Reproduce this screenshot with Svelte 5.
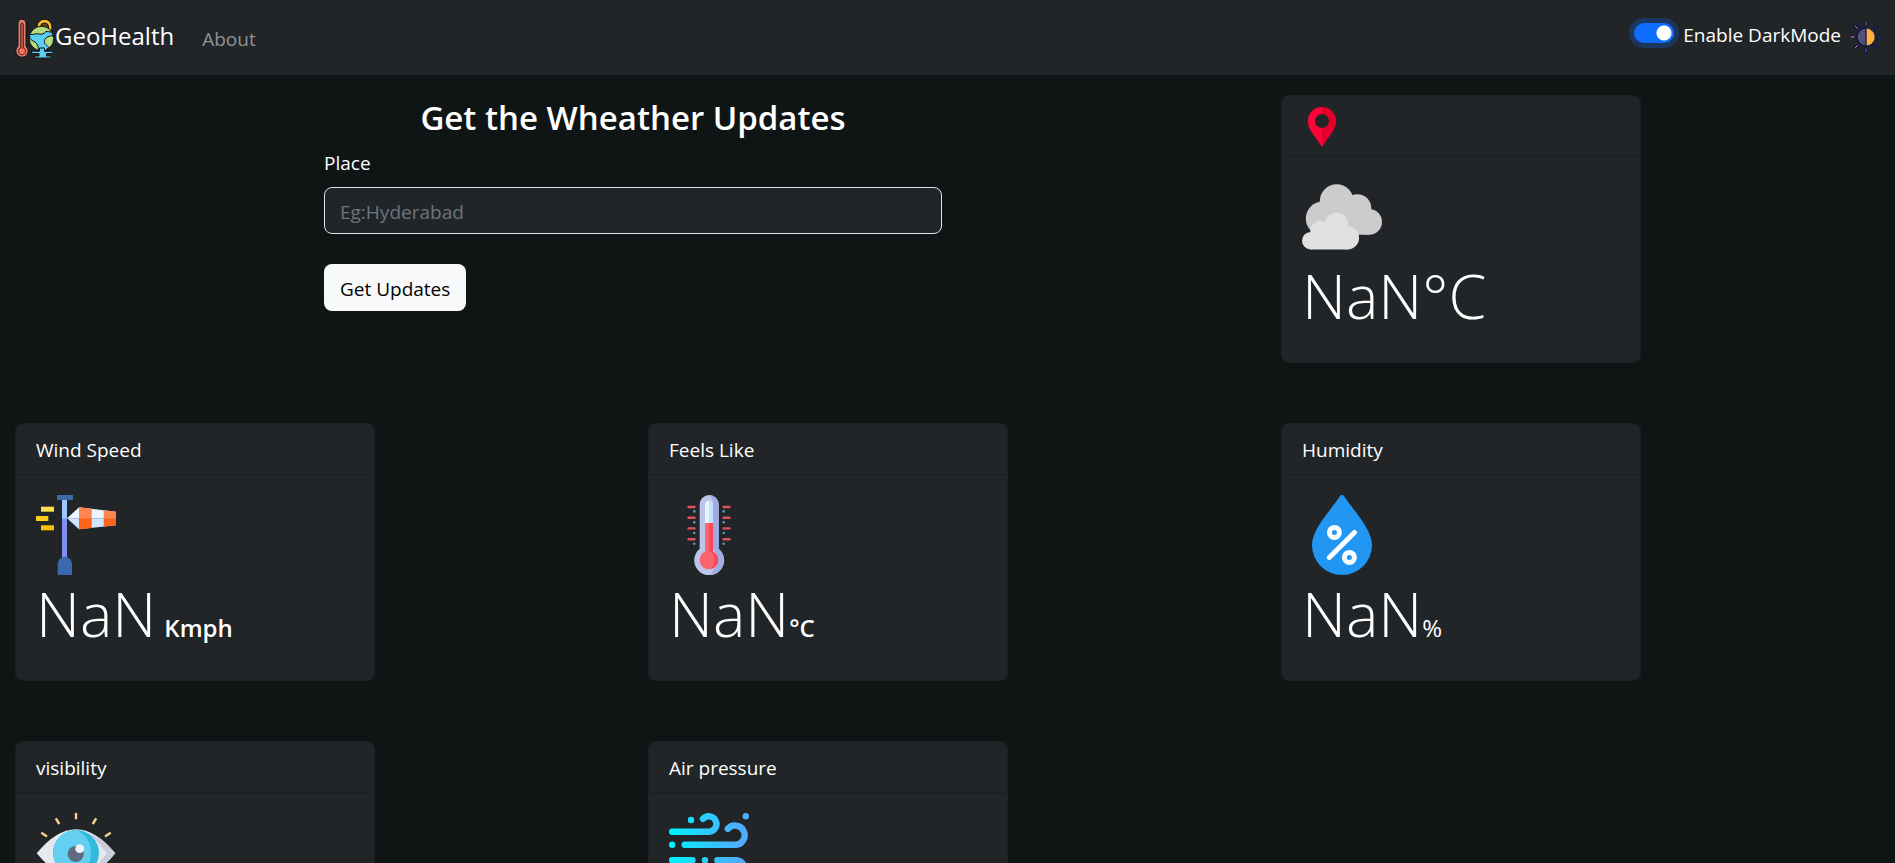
<script>
  let darkMode = $state(true);
  let place = $state('');

  const readings = [
    { title: 'Wind Speed', icon: 'windsock', value: 'NaN', unit: 'Kmph', spaced: true },
    { title: 'Feels Like', icon: 'thermometer', value: 'NaN', unit: '°C' },
    { title: 'Humidity', icon: 'drop', value: 'NaN', unit: '%', light: true },
    { title: 'visibility', icon: 'eye' },
    { title: 'Air pressure', icon: 'wind' }
  ];

  const icons = { windsock, thermometer, drop, eye, wind };
</script>

{#snippet windsock()}
  <svg class="icon" viewBox="0 0 80 80" aria-hidden="true">
    <path fill="#9bc9ff" d="M26 5h5v19h-5z" />
    <path fill="#8190f0" d="M26 23.500h5V63h-5z" />
    <path fill="#3f6ba5" d="M21 0h16v5H21z" />
    <path fill="#3a69ad" d="M21.700 80V69a7.200 7.200 0 0 1 14.400 0v11z" />
    <path fill="#ffdf52" d="M5 11.700h13v5H5z" />
    <path fill="#fdcb1a" d="M0 21h12.300v5H0z" />
    <path fill="#fdbf08" d="M5 30.300h13v5H5z" />
    <path fill="#e9f6ff" d="M31 23.300 43 12.300 80 16.700v6.600z" />
    <path fill="#cfe5ff" d="M31 23.300h49v7L43 34.300z" />
    <path fill="#ff8653" d="m43 12.300 12.700 1.500v9.500H43zM67.700 15.200 80 16.700v6.600H67.700z" />
    <path fill="#ff6417" d="M43 23.300h12.700v9.600L43 34.300zM67.700 23.300H80v7l-12.300 1.300z" />
  </svg>
{/snippet}

{#snippet thermometer()}
  <svg class="icon" viewBox="0 0 80 80" aria-hidden="true">
    <path fill="#bdc6ea" d="M30.700 9.500a9.500 9.500 0 0 1 19 0v44.200a15 15 0 1 1-19 0z" />
    <path fill="#a2abe0" d="M41 0a9.500 9.500 0 0 1 8.700 9.500v44.200A15 15 0 0 1 41 80c6-5 7-20 3-27V6z" />
    <path fill="#c4e2ff" d="M36 10a4 4 0 0 1 8 0v19h-8z" />
    <path fill="#e8f4ff" d="M36 10a4 4 0 0 1 4-4v23h-4z" />
    <path fill="#fd4755" d="M36 28h8v28.700a9.200 9.200 0 1 1-8 0z" />
    <path fill="#fe646f" d="M36 28h4v28.500c7 3 7 11 1.500 17.500A9.200 9.200 0 0 1 36 56.700z" />
    <g stroke="#e04f5c" stroke-width="2.400" stroke-linecap="round">
      {#each [12, 22.7, 33.4, 44.2] as y}
        <path d="M19.500 {y}h6M54.500 {y}h6" />
      {/each}
    </g>
    <g fill="#4a9ccb">
      {#each [16.4, 27.3, 38, 48.7] as y}
        <circle cx="25.300" cy={y} r="1.300" />
        <circle cx="54.700" cy={y} r="1.300" />
      {/each}
    </g>
  </svg>
{/snippet}

{#snippet drop()}
  <svg class="icon" viewBox="0 0 80 80" aria-hidden="true">
    <path fill="#2196f3" d="M38 1a2.500 2.500 0 0 1 4 0C51 15 70 34 70 50a30 30 0 0 1-60 0C10 34 29 15 38 1z" />
    <g fill="none" stroke="#fafdff" stroke-width="5" stroke-linecap="round">
      <circle cx="32.400" cy="37.400" r="5" />
      <circle cx="47.400" cy="62.400" r="5" />
      <path d="m27.300 62.500 25.200-25" />
    </g>
  </svg>
{/snippet}

{#snippet eye()}
  <svg class="icon" viewBox="0 0 80 80" aria-hidden="true">
    <path fill="#e4e9ed" d="M.700 40.300Q40-8 79.300 40.300 40 88 .700 40.300z" />
    <path fill="#c9cfda" d="M54 20.500q13 4.500 25.300 19.800Q67 56 54 60.500l17-20.200z" />
    <circle cx="40" cy="40" r="23" fill="#30bbdc" />
    <path fill="#63cff1" d="M40 17a23 23 0 0 0 0 46c20-6 20-40 0-46z" />
    <circle cx="39.700" cy="41" r="8" fill="#5d6c7e" />
    <circle cx="43.700" cy="35.700" r="4.400" fill="#f0f2fa" />
    <path
      fill="none"
      stroke="#fbd387"
      stroke-width="2.400"
      d="M40 0v6.300M19.800 5.300l3.500 5.700M60.200 5.300 56.700 11M5.300 19.800l5.700 3.600M74.700 19.800 69 23.400"
    />
  </svg>
{/snippet}

{#snippet wind()}
  <svg class="icon" viewBox="0 0 80 80" aria-hidden="true">
    <defs>
      <linearGradient id="breeze" gradientUnits="userSpaceOnUse" x1="0" y1="0" x2="70" y2="0">
        <stop offset="0" stop-color="#00f2fe" />
        <stop offset="1" stop-color="#4facfe" />
      </linearGradient>
    </defs>
    <g fill="none" stroke="url(#breeze)" stroke-width="6.400" stroke-linecap="round">
      <path d="M3.200 18.700H40a7.700 7.700 0 1 0-6-12.800" />
      <path d="M15.700 31.800H66a9.600 9.600 0 1 0-7.200-15.900" />
      <path d="M3.200 47.300H23.500M48.400 47.300H67a9 9 0 1 1-7 15" />
    </g>
    <g fill="url(#breeze)">
      <circle cx="22" cy="7" r="3.200" />
      <circle cx="76.800" cy="3.200" r="3.200" />
      <circle cx="3.200" cy="31.800" r="3.200" />
      <circle cx="36" cy="47.300" r="3.200" />
    </g>
  </svg>
{/snippet}

<div class="page">
  <nav class="navbar">
    <a class="brand" href="#home">
      <svg class="logo" viewBox="0 0 40 42" aria-hidden="true">
        <g stroke="#10100f" stroke-width="1">
          <path fill="#f6b92c" d="M22 9.500a7.500 7.500 0 0 1 15 .500l-.500 5H22z" />
          <path fill="#5a4a20" d="M25.500 10a4 4 0 0 1 8 0v3h-8z" />
          <circle cx="26.500" cy="21.500" r="12.300" fill="#b5dc80" />
          <path fill="#5ccdf3" d="M15 17.500c4 .500 6-1.500 9-.500s5-.500 7-2.500l5.500.500 2 4c-4-.500-8 1-9 4.500s3 4.500 4 7l-3.500 3.500h-7c1-5-1-8-4-9.500s-4.500-3-4.500-6z" />
          <path fill="#5ccdf3" d="M24.500 31h5v3.200h8.500v2.400h-6.500v2.400H36V41H19.500v-2h4.500v-2.400h-7.500v-2.400h8z" />
          <path fill="#e87d6b" d="M3 6a4 4 0 0 1 8 0v23.300a6.200 6.200 0 1 1-8 0z" />
          <path fill="#b34d40" stroke-width=".600" d="M5.500 7.500a1.500 1.500 0 0 1 3 0v23.300a3.700 3.700 0 1 1-3 0z" />
        </g>
        <circle cx="7" cy="34.200" r="2.800" fill="#fb715a" />
        <path stroke="#10100f" d="M12 7h2M12 11h2M12 15h2" />
      </svg>
      <span>GeoHealth</span>
    </a>
    <a class="link" href="#about">About</a>
    <div class="mode">
      <input id="dark-mode" type="checkbox" role="switch" bind:checked={darkMode} />
      <label for="dark-mode">Enable DarkMode</label>
      <svg class="sun" viewBox="0 0 34 34" aria-hidden="true">
        <g stroke="#11104a" stroke-width="3.200" stroke-linecap="round">
          <path d="M17 2v3M17 29v3M2 17h3M29 17h3M6.400 6.400l2 2M25.600 25.600l2 2M6.400 27.600l2-2M25.600 8.400l2-2" />
        </g>
        <g stroke-width="1" stroke-linecap="round">
          <path stroke="#e79a9c" d="M2 17h3M6.400 6.400l2 2M6.400 27.600l2-2" />
          <path stroke="#7f7197" d="M17 2v3M17 29v3" />
          <path stroke="#34406e" d="M29 17h3M25.600 25.600l2 2M25.600 8.400l2-2" />
        </g>
        <circle cx="17" cy="17" r="9" fill="#51517c" />
        <path fill="#ffb33e" d="M17 8a9 9 0 0 1 0 18z" />
        <path fill="none" stroke="#11104a" stroke-width="1.300" d="M17 8v18a9 9 0 0 1 0-18" />
        <path fill="none" stroke="#11104a" stroke-width="1.300" stroke-dasharray="1.500 1" d="M17 8a9 9 0 0 1 0 18" />
      </svg>
    </div>
  </nav>

  <main class="board">
    <form class="search" onsubmit={(event) => event.preventDefault()}>
      <h1>Get the Wheather Updates</h1>
      <label for="place">Place</label>
      <input id="place" type="text" placeholder="Eg:Hyderabad" bind:value={place} />
      <button type="submit">Get Updates</button>
    </form>

    <section class="card">
      <header>
        <svg class="pin" viewBox="0 0 40 40" aria-hidden="true">
          <path fill="#ff0338" d="M20 0A14.200 14.200 0 0 0 5.800 14.200C5.800 23 14 30 20 40V21a7 7 0 0 1 0-14z" />
          <path fill="#e4002b" d="M20 0a14.200 14.200 0 0 1 14.200 14.200C34.200 23 26 30 20 40V21a7 7 0 0 0 0-14z" />
        </svg>
      </header>
      <div class="body">
        <svg class="icon" viewBox="0 0 80 80" aria-hidden="true">
          <g fill="#cdcbcc">
            <circle cx="34.700" cy="24.200" r="16.900" />
            <circle cx="20.800" cy="41.500" r="17" />
            <circle cx="55.300" cy="31.200" r="14" />
            <circle cx="67.200" cy="44.900" r="12.800" />
            <path d="M25 30h35l7.200 27.700H21z" />
          </g>
          <g fill="#e2e0e1">
            <circle cx="8.700" cy="63.700" r="8.700" />
            <circle cx="18.200" cy="53.800" r="10" />
            <circle cx="34.400" cy="47.800" r="12" />
            <circle cx="45.700" cy="61" r="11.400" />
            <path d="M8.700 60 25 50h18l2.700 22.400h-37z" />
          </g>
        </svg>
        <p class="value">NaN°C</p>
      </div>
    </section>

    {#each readings as reading}
      <section class="card">
        <header>{reading.title}</header>
        <div class="body">
          {@render icons[reading.icon]()}
          {#if reading.value}
            <p class="value">
              {reading.value}<span class="unit" class:spaced={reading.spaced} class:light={reading.light}>{reading.unit}</span>
            </p>
          {/if}
        </div>
      </section>
    {/each}
  </main>
</div>

<style>
  :global(html) {
    scrollbar-width: none;
  }

  :global(body) {
    margin: 0;
    background: #0f1515;
  }

  .page,
  .page * {
    box-sizing: border-box;
  }

  .page {
    color: #fff;
    font: 400 19px/30px 'Open Sans', 'Noto Sans', sans-serif;
  }

  .navbar {
    display: flex;
    align-items: center;
    min-height: 75px;
    padding: 0 12px 0 15px;
    background: #212528;
  }

  .brand {
    display: flex;
    align-items: center;
    color: #fff;
    font-size: 24px;
    text-decoration: none;
  }

  .brand span {
    padding-bottom: 4px;
  }

  .logo {
    width: 40px;
    height: 42px;
  }

  .link {
    margin-left: 28px;
    padding-top: 2px;
    color: #909294;
    text-decoration: none;
  }

  .mode {
    display: flex;
    align-items: center;
    margin-left: auto;
    padding-bottom: 6px;
  }

  .mode input {
    appearance: none;
    width: 40px;
    height: 20px;
    margin: 0 9px 4px 0;
    border-radius: 10px;
    background: #495057 radial-gradient(circle at 10px 10px, #fff 7px, transparent 8px);
    box-shadow: 0 0 0 5px rgba(13, 110, 253, 0.25);
  }

  .mode input:checked {
    background: #0d6efd radial-gradient(circle at 30px 10px, #fff 7px, transparent 8px);
  }

  .sun {
    width: 34px;
    height: 34px;
    margin: 4px 0 0 8px;
  }

  .board {
    display: grid;
    grid-template-columns: repeat(3, 1fr);
    align-items: start;
    gap: 60px 30px;
    padding: 20px 11px 60px 15px;
  }

  .search {
    grid-column: span 2;
    display: flex;
    flex-direction: column;
    align-items: flex-start;
    width: 50%;
    margin: 0 auto;
  }

  h1 {
    align-self: center;
    margin: 0;
    padding: 2px 0 8px;
    font-size: 33px;
    font-weight: 600;
    line-height: 42px;
  }

  .search label {
    padding-top: 1px;
    margin-bottom: 9px;
  }

  .search input {
    width: 100%;
    height: 47px;
    margin-bottom: 30px;
    padding: 2px 15px 0;
    border: 1px solid #dee2e6;
    border-radius: 8px;
    background: #212529;
    color: #fff;
    font: inherit;
  }

  .search input::placeholder {
    color: #6c757d;
    opacity: 1;
  }

  button {
    height: 47px;
    padding: 2px 16px 0;
    border: 0;
    border-radius: 8px;
    background: #f8f9fa;
    color: #000;
    font: inherit;
  }

  .card {
    width: 360px;
    max-width: 100%;
    border: 1px solid #1c2022;
    border-radius: 8px;
    background: #212527;
  }

  .card header {
    padding: 11px 20px 9px;
    border-bottom: 1px solid #1a1e20;
  }

  .pin {
    display: block;
    width: 40px;
    height: 40px;
  }

  .body {
    padding: 20px;
  }

  .icon {
    display: block;
    width: 80px;
    height: 80px;
  }

  .value {
    margin: 0;
    padding-bottom: 7px;
    font-size: 61px;
    font-weight: 300;
    line-height: 78px;
    white-space: nowrap;
  }

  .unit {
    font-size: 24px;
    font-weight: 600;
    line-height: 30px;
  }

  .spaced {
    margin-left: 8px;
  }

  .light {
    font-weight: 500;
  }
</style>
